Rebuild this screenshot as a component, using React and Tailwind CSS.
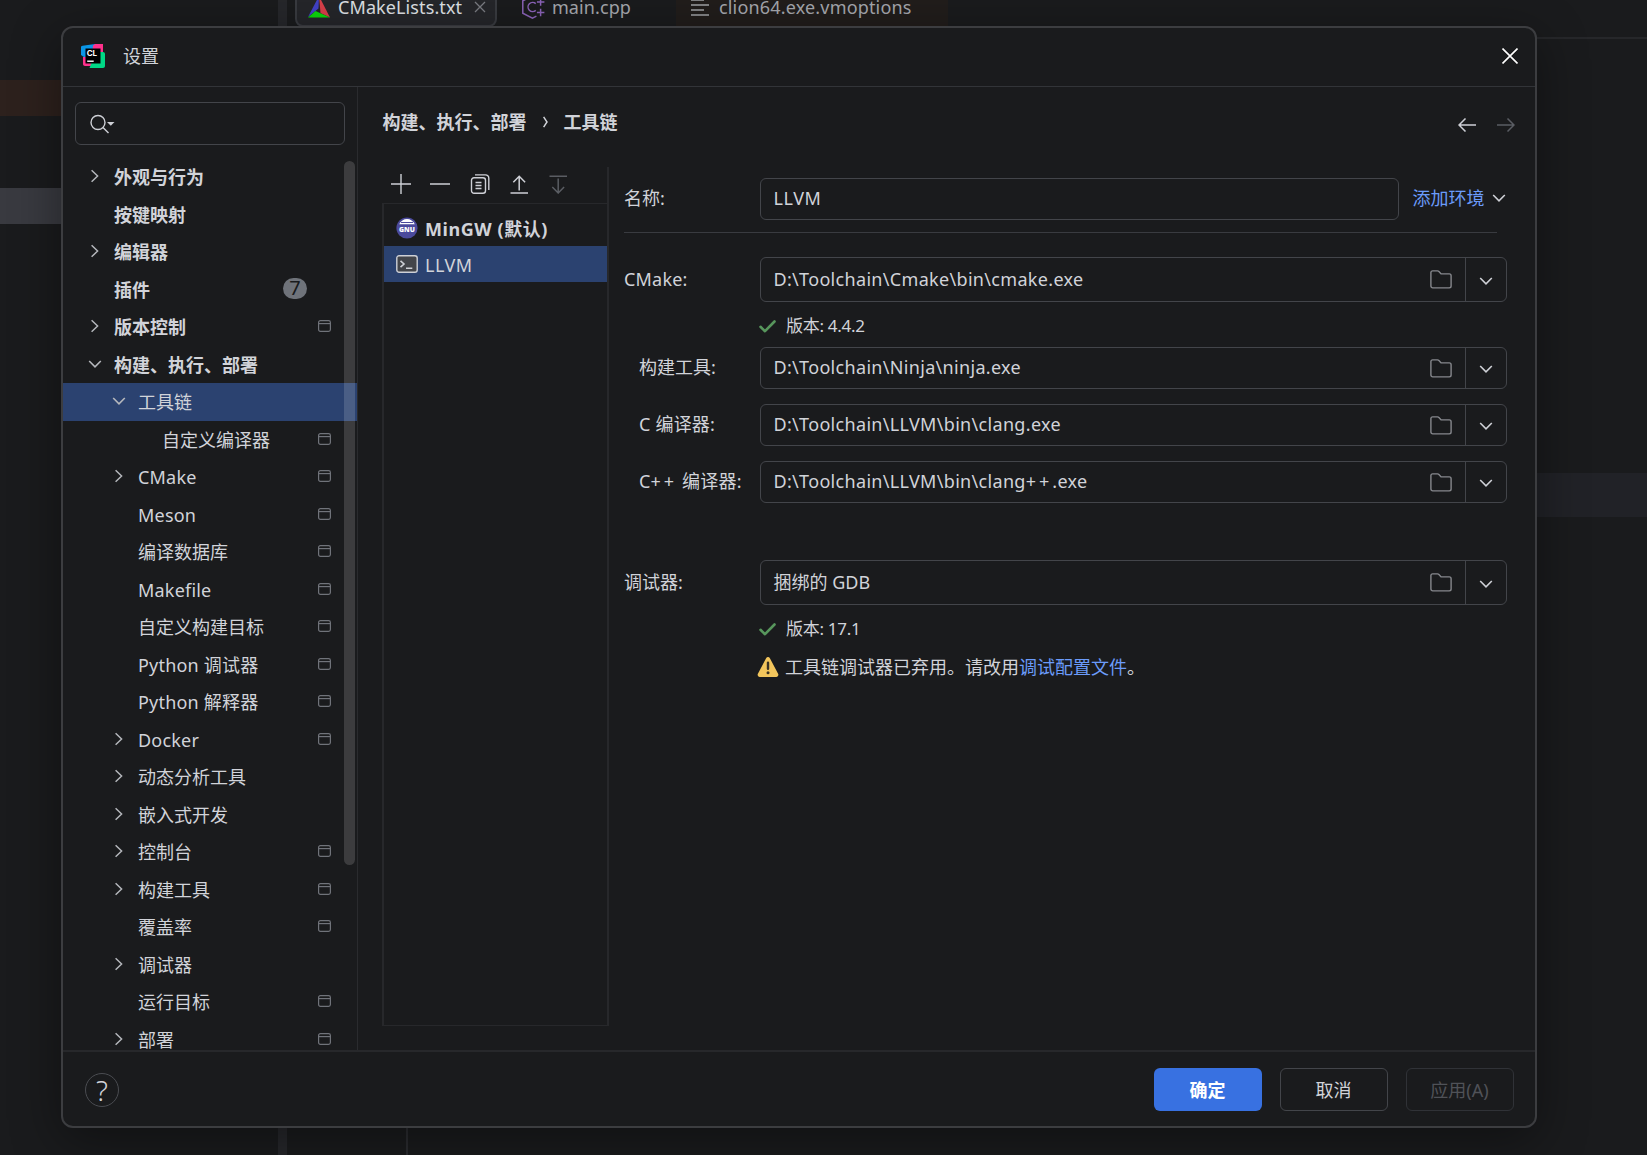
import React, { useState } from "react";
import clsx from "clsx";

const TREE = [
  { label: "外观与行为", level: 0, arrow: "right" },
  { label: "按键映射", level: 0 },
  { label: "编辑器", level: 0, arrow: "right" },
  { label: "插件", level: 0, badge: 7 },
  { label: "版本控制", level: 0, arrow: "right", project: true },
  { label: "构建、执行、部署", level: 0, arrow: "down" },
  { label: "工具链", level: 1, arrow: "down" },
  { label: "自定义编译器", level: 2, project: true },
  { label: "CMake", level: 1, arrow: "right", project: true },
  { label: "Meson", level: 1, project: true },
  { label: "编译数据库", level: 1, project: true },
  { label: "Makefile", level: 1, project: true },
  { label: "自定义构建目标", level: 1, project: true },
  { label: "Python 调试器", level: 1, project: true },
  { label: "Python 解释器", level: 1, project: true },
  { label: "Docker", level: 1, arrow: "right", project: true },
  { label: "动态分析工具", level: 1, arrow: "right" },
  { label: "嵌入式开发", level: 1, arrow: "right" },
  { label: "控制台", level: 1, arrow: "right", project: true },
  { label: "构建工具", level: 1, arrow: "right", project: true },
  { label: "覆盖率", level: 1, project: true },
  { label: "调试器", level: 1, arrow: "right" },
  { label: "运行目标", level: 1, project: true },
  { label: "部署", level: 1, arrow: "right", project: true },
];

const INDENT = ["pl-[24px]", "pl-[48px]", "pl-[72px]"];

const startsLatin = (text) => /^[A-Z]/.test(text);

/* ---------- icons ---------- */

function ChevronRight({ className }) {
  return (
    <svg className={className} width="14" height="14" viewBox="0 0 14 14" fill="none" stroke="currentColor" strokeWidth="1.5">
      <path d="M3.600 1.200L9.600 7l-6 5.800" />
    </svg>
  );
}

function ChevronDown({ className }) {
  return (
    <svg className={className} width="14" height="14" viewBox="0 0 14 14" fill="none" stroke="currentColor" strokeWidth="1.6">
      <path d="M1.2 4L7 9.8 12.8 4" />
    </svg>
  );
}

function ProjectIcon() {
  return (
    <svg className="-mt-px text-[#70737a]" width="13" height="12" viewBox="0 0 13 12" fill="none" stroke="currentColor" strokeWidth="1.2">
      <rect x="0.6" y="0.6" width="11.8" height="10.8" rx="1.8" />
      <path d="M0.6 3.6h11.8" />
    </svg>
  );
}

function FolderIcon() {
  return (
    <svg className="text-[#86888d]" width="22" height="19" viewBox="0 0 22 19" fill="none" stroke="currentColor" strokeWidth="1.4" strokeLinejoin="round">
      <path d="M0.9 2.6C0.9 1.6 1.6 0.9 2.6 0.9h4.9c.6 0 1 .2 1.4.6l2.3 2.4h8.1c1 0 1.8.8 1.8 1.8v10.4c0 1-.8 1.8-1.8 1.8H2.7c-1 0-1.8-.8-1.8-1.8z" />
    </svg>
  );
}

function ClionLogo() {
  return (
    <svg width="24" height="24" viewBox="0 0 24 24">
      <path d="M0 2.5L1.5 1.8 14 0v12L5 14.5 0 11z" fill="#0a95e6" />
      <path d="M12 1.5L14 0h8v9L11 12z" fill="#ff318c" />
      <path d="M2 13h10l1 9H4c-1.1 0-2-.9-2-2z" fill="#ff318c" />
      <path d="M19 8h3c1.100 0 2 .9 2 2v12c0 1.100-.9 2-2 2H8.500l2-5z" fill="#00d886" />
      <rect x="4.500" y="4.500" width="15" height="15" fill="#000" />
      <rect x="6.200" y="16.500" width="6.500" height="1.400" fill="#fff" />
      <text x="5.700" y="11.800" fill="#fff" fontSize="8" fontWeight="700" fontFamily="Inter, sans-serif">CL</text>
    </svg>
  );
}

function GnuIcon() {
  return (
    <svg width="22" height="22" viewBox="0 0 22 22">
      <circle cx="11" cy="11" r="10.600" fill="#4b4a9c" />
      <path d="M3.200 7.200C4.800 4 7.700 2 11 2s6.200 2 7.800 5.200z" fill="#fff" />
      <path d="M5 5.500h12" stroke="#4b4a9c" strokeWidth="1" />
      <text x="11" y="15.400" textAnchor="middle" fill="#fff" fontSize="6.800" fontWeight="800" fontFamily="Open Sans, sans-serif">GNU</text>
    </svg>
  );
}

function TerminalIcon() {
  return (
    <svg width="22" height="18" viewBox="0 0 22 18" fill="none" stroke="#ced0d6">
      <rect x="0.800" y="0.700" width="20.400" height="16.600" rx="2.300" fill="#43454a" strokeWidth="1.400" />
      <path d="M4.500 5.800L8 9l-3.500 3.200M10 13.200h6.300" strokeWidth="1.600" />
    </svg>
  );
}

function CheckIcon() {
  return (
    <svg width="17" height="13" viewBox="0 0 17 13" fill="none" stroke="#57965c" strokeWidth="2.600" strokeLinecap="round" strokeLinejoin="round">
      <path d="M1.500 6.800l4.500 4.400L15.500 1.500" />
    </svg>
  );
}

function WarningIcon() {
  return (
    <svg width="22" height="20" viewBox="0 0 22 20">
      <path d="M9.100 1.200c.8-1.500 3-1.500 3.800 0l8.200 15.500c.8 1.500-.2 3.200-1.900 3.200H2.800C1.100 19.900.1 18.200.9 16.700z" fill="#f2c55c" />
      <path d="M11 5.800v6" stroke="#3a3224" strokeWidth="2.400" strokeLinecap="round" />
      <circle cx="11" cy="15.700" r="1.500" fill="#3a3224" />
    </svg>
  );
}

/* ---------- editor behind the dialog ---------- */

function EditorBackdrop() {
  return (
    <div className="flex h-full">
      <div className="w-[278px] pt-20">
        <div className="h-9 bg-[#2d211d]" />
        <div className="mt-[72px] h-9 bg-[#393a40]" />
      </div>
      <div className="w-[9px] bg-[#26272b]" />
      <div className="flex-1">
        <div className="flex h-[37px] items-start pl-2 text-[18px] leading-[28px] text-[#a5a7ad]">
          <div className="-mt-[13px] flex h-10 w-[202px] items-center rounded-lg border-2 border-[#393b40] bg-[#25262a] pl-[11px] text-[#dfe1e5]">
            <svg width="22" height="22" viewBox="0 0 22 22">
              <path d="M11 0L10.500 12.500 0 21z" fill="#4242c8" />
              <path d="M11 0l11 21.500-9.500-4.500z" fill="#d8404a" />
              <path d="M0 21.500l7.500-6.500L22 21.500z" fill="#0bd80b" />
            </svg>
            <span className="ml-2 w-[124px] tracking-[0.1px] whitespace-nowrap">CMakeLists.txt</span>
            <svg className="ml-3 text-[#7a7c82]" width="12" height="12" viewBox="0 0 12 12" stroke="currentColor" strokeWidth="1.300">
              <path d="M1 1l10 10M11 1L1 11" />
            </svg>
          </div>
          <div className="-mt-[7px] ml-6 flex w-[110px] items-center">
            <svg width="24" height="24" viewBox="0 0 24 24" fill="none" stroke="#8b63b8" strokeWidth="1.500">
              <path d="M16 2.500L11.500.8 1.800 5.800v12.400l9.700 5 4-2" />
              <path d="M14.800 8.600a4.600 4.600 0 100 6.800" />
              <path d="M16 7h7.500M19.700 3.300v7.400M16 17.500h7.500M19.700 13.800v7.400" />
            </svg>
            <span className="ml-[7px] tracking-[0.1px]">main.cpp</span>
          </div>
          <div className="-mt-[7px] ml-[45px] flex h-[34px] w-[272px] items-start bg-[#211d1b] pl-[15px]">
            <svg className="mt-1" width="18" height="20" viewBox="0 0 18 20" stroke="#a0a2a7" strokeWidth="1.400">
              <path d="M0 3h13M0 8h18M0 13h13M0 18h18" />
            </svg>
            <span className="ml-2.5 tracking-[0.170px]">clion64.exe.vmoptions</span>
          </div>
        </div>
        <div className="h-0.5 bg-[#26272a]" />
        <div className="mt-[434px] h-11 bg-[#212227]" />
        <div className="h-[638px] w-[121px] border-r-2 border-[#2b2c30]" />
      </div>
    </div>
  );
}

/* ---------- sidebar ---------- */

function TreeRow({ item, selected, onSelect }) {
  return (
    <div
      onClick={onSelect}
      className={clsx(
        "flex h-[37.5px] shrink-0 cursor-pointer items-center pr-[26px]",
        INDENT[item.level],
        selected && "bg-[#2b4270]"
      )}
    >
      <span className="flex w-[27px] shrink-0 pb-px pl-[0.500px] text-[#b5b7bc]">
        {item.arrow === "right" && <ChevronRight />}
        {item.arrow === "down" && <ChevronDown />}
      </span>
      <span
        className={clsx(
          "flex-1 pt-px leading-6 whitespace-nowrap",
          item.level === 0 && "font-bold",
          startsLatin(item.label) && "tracking-[0.2px]"
        )}
      >
        {item.label}
      </span>
      {item.badge && (
        <span className="mr-6 mb-0.5 flex h-[21px] w-6 items-center justify-center rounded-full bg-[#6f737a] text-xl leading-none text-[#1a1b1d]">
          {item.badge}
        </span>
      )}
      {item.project && <ProjectIcon />}
    </div>
  );
}

function Sidebar() {
  const [current, setCurrent] = useState("工具链");

  return (
    <aside className="relative flex w-[295px] flex-col overflow-hidden border-r border-[#2a2b2e]">
      <div className="mt-[15px] ml-3 flex h-[43px] w-[270px] shrink-0 items-center rounded-md border-[1.500px] border-[#43454a] pl-3.5">
        <svg className="text-[#ced0d6]" width="26" height="20" viewBox="0 0 26 20" fill="none" stroke="currentColor" strokeWidth="1.400">
          <circle cx="8" cy="8.500" r="7" />
          <path d="M13 13.500l5.500 5.500" />
          <path d="M17 8h7.500l-3.700 3.700z" fill="currentColor" stroke="none" />
        </svg>
      </div>
      <div className="mt-[13px] flex min-h-0 flex-1 flex-col overflow-hidden">
        {TREE.map((item) => (
          <TreeRow
            key={item.label + item.level}
            item={item}
            selected={item.label === current}
            onSelect={() => setCurrent(item.label)}
          />
        ))}
      </div>
      {/* overlay scrollbar */}
      <div className="absolute top-[74px] right-[2px] h-[704px] w-[11px] rounded-full bg-white/15" />
    </aside>
  );
}

/* ---------- toolchain list ---------- */

function ToolchainList() {
  return (
    <div className="flex h-[859px] w-[227px] flex-col border-r-2 border-[#27282b]">
      <div className="flex h-9 items-center gap-[19.300px] pb-0.5 pl-[9px] text-[#ced0d6]">
        <svg width="20" height="20" viewBox="0 0 20 20" stroke="currentColor" strokeWidth="1.400">
          <path d="M10 0v20M0 10h20" />
        </svg>
        <svg width="20" height="20" viewBox="0 0 20 20" stroke="currentColor" strokeWidth="1.400">
          <path d="M0 10h20" />
        </svg>
        <svg width="20" height="20" viewBox="0 0 20 20" fill="none" stroke="currentColor" strokeWidth="1.400">
          <rect x="1.500" y="3.700" width="14" height="15.600" rx="2.500" />
          <path d="M5 .9h10.500a3.300 3.300 0 013.300 3.300V16M5.500 8.500h6M5.500 11.500h6M5.500 14.500h6" />
        </svg>
        <svg width="20" height="20" viewBox="0 0 20 20" fill="none" stroke="currentColor" strokeWidth="1.500">
          <path d="M1.500 19h17.500M10.200 16.500V2.500M4.300 8.200L10.200 2.200l5.900 6" />
        </svg>
        <svg className="text-[#5a5d63]" width="20" height="20" viewBox="0 0 20 20" fill="none" stroke="currentColor" strokeWidth="1.500">
          <path d="M1.500 2.200h17.500M10.200 4.500v14M4.300 13l5.900 6 5.900-6" />
        </svg>
      </div>
      <div className="flex-1 border-t border-b border-l-2 border-[#27282b] pt-1.5">
        <div className="flex h-9 items-center pl-3">
          <GnuIcon />
          <span className="ml-[7px] pt-0.5 font-bold tracking-[0.550px]">MinGW (默认)</span>
        </div>
        <div className="flex h-9 items-center bg-[#2b4270] pl-3">
          <TerminalIcon />
          <span className="ml-[7px] pt-0.5 tracking-[0.500px]">LLVM</span>
        </div>
      </div>
    </div>
  );
}

/* ---------- form ---------- */

// plus signs are set a little wider than the rest of the text
function WidePlus({ text }) {
  const [before, after] = text.split("++");
  if (after === undefined) return text;
  return (
    <>
      {before}
      <span className="tracking-[3px]">++</span>
      {after}
    </>
  );
}

function PathCombo({ value, tall }) {
  return (
    <div className={clsx("flex w-[747px] items-stretch rounded-md border-[1.500px] border-[#43454a]", tall ? "h-[45px]" : "h-[42px]")}>
      <div className="flex flex-1 items-center justify-between pr-[13px] pl-[12.500px]">
        <span className={clsx(!tall && "pb-0.5", startsLatin(value) && "tracking-[0.320px]")}>
          <WidePlus text={value} />
        </span>
        <FolderIcon />
      </div>
      <div className="flex w-[41px] items-center justify-center border-l border-[#43454a] pt-0.5 text-[#ced0d6]">
        <ChevronDown />
      </div>
    </div>
  );
}

function Field({ label, nested, tall, className, children }) {
  return (
    <div className={clsx("flex items-center", className)}>
      <label
        className={clsx(
          "w-[136px] shrink-0 whitespace-nowrap",
          nested && "pl-[15px]",
          !tall && "pb-0.5",
          startsLatin(label) && "tracking-[0.2px]"
        )}
      >
        <WidePlus text={label} />
      </label>
      {children}
    </div>
  );
}

function Version({ value, className }) {
  return (
    <div className={clsx("flex h-6 items-center pl-[135px] text-[17px]", className)}>
      <CheckIcon />
      <span className="ml-2.5 tracking-[-0.3px]">版本: {value}</span>
    </div>
  );
}

function ToolchainForm() {
  return (
    <div className="ml-[15px] flex w-[884px] flex-col pt-[11px]">
      <Field label="名称:">
        <div className="flex h-[42px] w-[639px] items-center rounded-md border-[1.500px] border-[#43454a] pb-0.5 pl-[12.500px] tracking-[0.600px]">
          LLVM
        </div>
        <button className="ml-[13.500px] flex items-center pb-px text-[#6b9bfa]">
          添加环境
          <ChevronDown className="mb-0.5 ml-[7px] text-[#ced0d6]" />
        </button>
      </Field>
      <div className="mt-3 h-px w-[873px] bg-[#393b40]" />
      <Field label="CMake:" tall className="mt-6">
        <PathCombo value="D:\Toolchain\Cmake\bin\cmake.exe" tall />
      </Field>
      <Version value="4.4.2" className="mt-3" />
      <Field label="构建工具:" nested className="mt-[9px]">
        <PathCombo value="D:\Toolchain\Ninja\ninja.exe" />
      </Field>
      <Field label="C 编译器:" nested className="mt-[15px]">
        <PathCombo value="D:\Toolchain\LLVM\bin\clang.exe" />
      </Field>
      <Field label="C++ 编译器:" nested className="mt-[15px]">
        <PathCombo value="D:\Toolchain\LLVM\bin\clang++.exe" />
      </Field>
      <Field label="调试器:" tall className="mt-[57px]">
        <PathCombo value="捆绑的 GDB" tall />
      </Field>
      <Version value="17.1" className="mt-3" />
      <div className="mt-[14px] flex h-6 items-center pl-[133px]">
        <WarningIcon />
        <p className="ml-1.5">
          工具链调试器已弃用。请改用<a className="text-[#6b9bfa]">调试配置文件</a>。
        </p>
      </div>
    </div>
  );
}

/* ---------- dialog ---------- */

function SettingsDialog() {
  return (
    <div className="absolute top-[26px] left-[61px] flex h-[1102px] w-[1476px] flex-col overflow-hidden rounded-xl border-2 border-[#3c3d40] bg-[#1a1b1d] shadow-[0_12px_50px_rgba(0,0,0,0.4)]">
      <header className="flex h-[59px] shrink-0 items-center border-b border-[#323438] pr-[17px] pb-[3px] pl-[18px]">
        <ClionLogo />
        <h1 className="ml-[18px] flex-1 pt-px">设置</h1>
        <svg className="text-white" width="16" height="16" viewBox="0 0 16 16" stroke="currentColor" strokeWidth="1.600">
          <path d="M.5.5l15 15M15.500.5l-15 15" />
        </svg>
      </header>

      <div className="flex min-h-0 flex-1">
        <Sidebar />
        <main className="flex flex-1 flex-col pl-6">
          <div className="flex h-20 shrink-0 items-start justify-between pr-5">
            <div className="flex items-center pt-[21px] pl-[0.500px] leading-7 font-bold">
              <span>构建、执行、部署</span>
              <svg className="mx-4" width="5" height="12" viewBox="0 0 5 12" fill="none" stroke="currentColor" strokeWidth="1.500">
                <path d="M.6.800L4 6 .6 11.200" />
              </svg>
              <span>工具链</span>
            </div>
            <div className="flex gap-[21px] pt-[31px] text-[#ced0d6]">
              <svg width="18" height="14" viewBox="0 0 18 14" fill="none" stroke="currentColor" strokeWidth="1.500">
                <path d="M18 7H1M7.500.5L1 7l6.500 6.500" />
              </svg>
              <svg className="text-[#5a5d63]" width="18" height="14" viewBox="0 0 18 14" fill="none" stroke="currentColor" strokeWidth="1.500">
                <path d="M0 7h17M10.500.5L17 7l-6.500 6.500" />
              </svg>
            </div>
          </div>
          <div className="flex">
            <ToolchainList />
            <ToolchainForm />
          </div>
        </main>
      </div>

      <footer className="flex h-[76px] shrink-0 items-center border-t-2 border-[#27282b] pt-px pr-[21.500px] pl-[22px]">
        <button className="flex size-[34px] items-center justify-center rounded-full border-[1.500px] border-[#4a4c51] text-[28px] leading-none font-light">
          ?
        </button>
        <div className="ml-auto flex gap-[18px]">
          <button className="h-[43px] w-[108px] rounded-md bg-[#3871e1] pt-px font-bold text-white">确定</button>
          <button className="h-[43px] w-[108px] rounded-md border-[1.500px] border-[#43454a] pt-px">取消</button>
          <button className="h-[43px] w-[108px] rounded-md border-[1.500px] border-[#303237] pt-px text-[#505258]" disabled>
            应用(A)
          </button>
        </div>
      </footer>
    </div>
  );
}

export default function App() {
  return (
    <div className="relative h-[1155px] w-[1647px] overflow-hidden bg-[#1a1b1d] font-['Noto_Sans','Noto_Sans_CJK_SC',sans-serif] text-[18px] text-[#d1d3d9]">
      <EditorBackdrop />
      <SettingsDialog />
    </div>
  );
}
